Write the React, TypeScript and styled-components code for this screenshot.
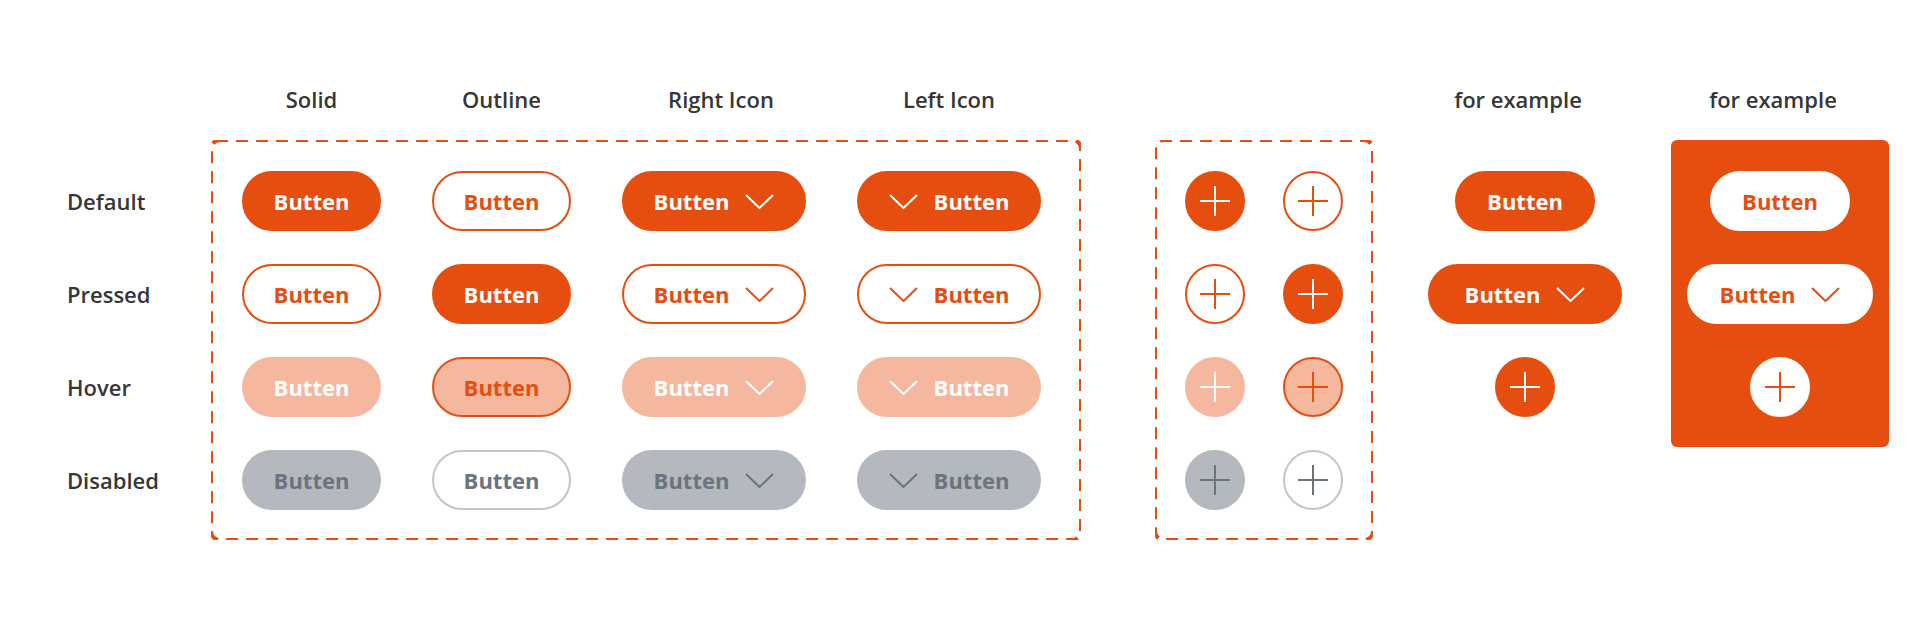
import React from "react";
import styled, { createGlobalStyle } from "styled-components";

const ORANGE = "#E64E10";
const PEACH = "#F5B89E";
const GREY = "#B4B9BF";
const GREY_TEXT = "#6B737C";
const GREY_LINE = "#C2C5C9";
const INK = "#363636";

const GlobalStyle = createGlobalStyle`
  body {
    margin: 0;
    background: #fff;
    font-family: "Open Sans", "Liberation Sans", sans-serif;
  }
`;

type Tone =
  | "solid"
  | "outline"
  | "hover"
  | "hoverOutline"
  | "disabled"
  | "disabledOutline"
  | "inverse";

const tones: Record<Tone, { bg: string; line: string; fg: string }> = {
  solid: { bg: ORANGE, line: ORANGE, fg: "#fff" },
  outline: { bg: "#fff", line: ORANGE, fg: ORANGE },
  hover: { bg: PEACH, line: PEACH, fg: "#fff" },
  hoverOutline: { bg: PEACH, line: ORANGE, fg: ORANGE },
  disabled: { bg: GREY, line: GREY, fg: GREY_TEXT },
  disabledOutline: { bg: "#fff", line: GREY_LINE, fg: GREY_TEXT },
  inverse: { bg: "#fff", line: "#fff", fg: ORANGE },
};

// dashed frame drawn as an svg background so the dash length matches the mock
const dashSvg = encodeURIComponent(
  `<svg xmlns='http://www.w3.org/2000/svg' width='100%' height='100%'><rect width='100%' height='100%' rx='9' ry='9' fill='none' stroke='${ORANGE}' stroke-width='4' stroke-dasharray='12 8' stroke-dashoffset='4'/></svg>`
);

const Page = styled.div`
  display: flex;
  align-items: flex-start;
  min-height: 644px;
  box-sizing: border-box;
  padding: 79px 0 0 67px;
`;

const Section = styled.div<{ $gap?: number; $width?: number }>`
  display: flex;
  flex-direction: column;
  margin-left: ${(p) => p.$gap ?? 0}px;
  width: ${(p) => (p.$width ? `${p.$width}px` : "auto")};
`;

const HeaderRow = styled.div<{ $cols?: string; $pad?: string }>`
  display: grid;
  grid-template-columns: ${(p) => p.$cols ?? "1fr"};
  column-gap: 49px;
  height: 40px;
  margin-bottom: 21px;
  padding: ${(p) => p.$pad ?? "0"};
`;

const Heading = styled.div<{ $nudge?: number }>`
  display: flex;
  align-items: center;
  justify-content: center;
  padding-left: ${(p) => Math.max(p.$nudge ?? 0, 0)}px;
  padding-right: ${(p) => Math.max(-(p.$nudge ?? 0), 0)}px;
  font-size: 22px;
  font-weight: 600;
  color: ${INK};
  white-space: nowrap;
`;

const Stack = styled.div<{ $align?: string }>`
  display: flex;
  flex-direction: column;
  align-items: ${(p) => p.$align ?? "center"};
  gap: 33px;
  padding: 31px 0 30px;
`;

const RowLabel = styled.div`
  display: flex;
  align-items: center;
  height: 60px;
  font-size: 22px;
  font-weight: 600;
  color: ${INK};
`;

const DashedBox = styled.div`
  background-image: url("data:image/svg+xml,${dashSvg}");
`;

const ButtonGrid = styled.div`
  display: grid;
  grid-template-columns: 141px 141px 186px 186px;
  grid-auto-rows: 60px;
  column-gap: 49px;
  row-gap: 33px;
  justify-items: center;
  align-items: center;
  padding: 31px 39px 30px 30px;
`;

const CircleGrid = styled.div`
  display: grid;
  grid-template-columns: 60px 60px;
  grid-auto-rows: 60px;
  column-gap: 38px;
  row-gap: 33px;
  padding: 31px 30px 30px;
`;

const Panel = styled.div`
  background: ${ORANGE};
  border-radius: 6px;
`;

const Pill = styled.button<{ $tone: Tone; $pad?: number }>`
  display: inline-flex;
  align-items: center;
  justify-content: center;
  gap: 16px;
  box-sizing: border-box;
  height: 60px;
  padding: 0 ${(p) => p.$pad ?? 30}px;
  border: 2px solid ${(p) => tones[p.$tone].line};
  border-radius: 30px;
  background: ${(p) => tones[p.$tone].bg};
  color: ${(p) => tones[p.$tone].fg};
  font-family: "Open Sans", "Liberation Sans", sans-serif;
  font-size: 22px;
  font-weight: 700;
  line-height: 1;
  white-space: nowrap;
  cursor: pointer;

  &:disabled {
    cursor: default;
  }
`;

const Round = styled.button<{ $tone: Tone }>`
  display: flex;
  align-items: center;
  justify-content: center;
  box-sizing: border-box;
  width: 60px;
  height: 60px;
  padding: 0;
  border: 2px solid ${(p) => tones[p.$tone].line};
  border-radius: 50%;
  background: ${(p) => tones[p.$tone].bg};
  color: ${(p) => tones[p.$tone].fg};
  cursor: pointer;

  &:disabled {
    cursor: default;
  }
`;

const Chevron = () => (
  <svg width="29" height="15" viewBox="0 0 29 15" fill="none">
    <polyline
      points="1,1 14.5,14 28,1"
      stroke="currentColor"
      strokeWidth="2"
      strokeLinejoin="miter"
    />
  </svg>
);

const Plus = () => (
  <svg width="30" height="30" viewBox="0 0 30 30" fill="none">
    <path d="M0 15H30M15 0V30" stroke="currentColor" strokeWidth="2" />
  </svg>
);

type IconSide = "none" | "right" | "left";

const Butten = ({ tone, icon = "none", pad }: { tone: Tone; icon?: IconSide; pad?: number }) => (
  <Pill $tone={tone} $pad={pad} disabled={tone.startsWith("disabled")}>
    {icon === "left" && <Chevron />}
    Butten
    {icon === "right" && <Chevron />}
  </Pill>
);

const PlusButton = ({ tone }: { tone: Tone }) => (
  <Round $tone={tone} disabled={tone.startsWith("disabled")}>
    <Plus />
  </Round>
);

const states: { label: string; main: Tone; alt: Tone }[] = [
  { label: "Default", main: "solid", alt: "outline" },
  { label: "Pressed", main: "outline", alt: "solid" },
  { label: "Hover", main: "hover", alt: "hoverOutline" },
  { label: "Disabled", main: "disabled", alt: "disabledOutline" },
];

const columns = [
  { title: "Solid", nudge: 0 },
  { title: "Outline", nudge: 0 },
  { title: "Right Icon", nudge: 14 },
  { title: "Left Icon", nudge: 0 },
];

export default function App() {
  return (
    <>
      <GlobalStyle />
      <Page>
        <Section $width={144}>
          <HeaderRow />
          <Stack $align="flex-start">
            {states.map((s) => (
              <RowLabel key={s.label}>{s.label}</RowLabel>
            ))}
          </Stack>
        </Section>

        <Section>
          <HeaderRow $cols="141px 141px 186px 186px" $pad="0 39px 0 30px">
            {columns.map((c) => (
              <Heading key={c.title} $nudge={c.nudge}>
                {c.title}
              </Heading>
            ))}
          </HeaderRow>
          <DashedBox>
            <ButtonGrid>
              {states.map((s) => (
                <React.Fragment key={s.label}>
                  <Butten tone={s.main} />
                  <Butten tone={s.alt} />
                  <Butten tone={s.main} icon="right" />
                  <Butten tone={s.main} icon="left" />
                </React.Fragment>
              ))}
            </ButtonGrid>
          </DashedBox>
        </Section>

        <Section $gap={74}>
          <HeaderRow />
          <DashedBox>
            <CircleGrid>
              {states.map((s) => (
                <React.Fragment key={s.label}>
                  <PlusButton tone={s.main} />
                  <PlusButton tone={s.alt} />
                </React.Fragment>
              ))}
            </CircleGrid>
          </DashedBox>
        </Section>

        <Section $gap={55} $width={194}>
          <HeaderRow>
            <Heading $nudge={-14}>for example</Heading>
          </HeaderRow>
          <Stack>
            <Butten tone="solid" />
            <Butten tone="solid" icon="right" pad={35} />
            <PlusButton tone="solid" />
          </Stack>
        </Section>

        <Section $gap={49} $width={218}>
          <HeaderRow>
            <Heading $nudge={-14}>for example</Heading>
          </HeaderRow>
          <Panel>
            <Stack>
              <Butten tone="inverse" />
              <Butten tone="inverse" icon="right" pad={31} />
              <PlusButton tone="inverse" />
            </Stack>
          </Panel>
        </Section>
      </Page>
    </>
  );
}
